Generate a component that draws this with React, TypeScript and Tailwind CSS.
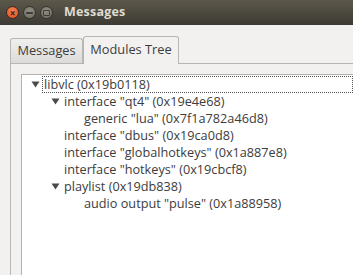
import React from 'react';

type Node = { label: string; depth: number; open?: boolean };

const NODES: Node[] = [
    { label: 'libvlc (0x19b0118)', depth: 0, open: true },
    { label: 'interface "qt4" (0x19e4e68)', depth: 1, open: true },
    { label: 'generic "lua" (0x7f1a782a46d8)', depth: 2 },
    { label: 'interface "dbus" (0x19ca0d8)', depth: 1 },
    { label: 'interface "globalhotkeys" (0x1a887e8)', depth: 1 },
    { label: 'interface "hotkeys" (0x19cbcf8)', depth: 1 },
    { label: 'playlist (0x19db838)', depth: 1, open: true },
    { label: 'audio output "pulse" (0x1a88958)', depth: 2 },
];

const PAD = ['pl-[9px]', 'pl-[29px]', 'pl-[49px]'];

function TitleBar() {
    return (
        <div className="h-[25px] flex items-center bg-gradient-to-b from-[#5c594b] to-[#3c3a33] pl-[6px]">
            <div className="flex items-center gap-[4px]">
                <span className="w-[13px] h-[13px] rounded-full bg-[radial-gradient(circle_at_50%_35%,#f7845a,#df4a1b)] border border-[#3a2a20] flex items-center justify-center text-[#3b2418] text-[10px] leading-none font-bold">
                    ×
                </span>
                <span className="w-[13px] h-[13px] rounded-full bg-[radial-gradient(circle_at_50%_35%,#8f8c82,#6c6a61)] border border-[#35332d] flex items-center justify-center">
                    <span className="w-[7px] h-[2px] bg-[#3f3d37] rounded-sm" />
                </span>
                <span className="w-[13px] h-[13px] rounded-full bg-[radial-gradient(circle_at_50%_35%,#8f8c82,#6c6a61)] border border-[#35332d] flex items-center justify-center">
                    <span className="w-[7px] h-[6px] border-[1.5px] border-[#3f3d37] rounded-[1px]" />
                </span>
            </div>
            <span className="ml-[11px] text-[12.5px] font-bold text-[#dfdbd2] tracking-[0.2px]">Messages</span>
        </div>
    );
}

function Tabs() {
    return (
        <div className="flex items-end pl-[10px] h-[38px]">
            <div className="w-[73px] h-[25px] border border-b-0 border-[#b7b6b2] rounded-t-[3px] bg-gradient-to-b from-[#efefee] to-[#dcdbd9] flex items-center justify-center text-[12.8px] text-[#3c3c3c]">
                Messages
            </div>
            <div className="w-[96px] h-[28px] -mb-px relative border border-b-0 border-[#b7b6b2] rounded-t-[3px] bg-[#f2f1f0] flex items-center justify-center text-[12.8px] text-[#3c3c3c] pb-[2px]">
                Modules Tree
            </div>
            <div className="flex-1" />
        </div>
    );
}

function Tree() {
    return (
        <div className="flex-1 bg-white border-l border-t border-[#b3b2ae] pt-[1px]">
            {NODES.map((n, i) => (
                <div key={i} className={`h-[17px] flex items-center ${PAD[n.depth]}`}>
                    <span className="w-[11px] shrink-0 flex items-center">
                        {n.open && (
                            <svg width="9" height="7" viewBox="0 0 9 7">
                                <path d="M0.5 0.5 L8.5 0.5 L4.5 6.5 Z" fill="#4a4a4a" />
                            </svg>
                        )}
                    </span>
                    <span
                        className={`whitespace-nowrap leading-[15px] text-[12.7px] text-[#3c3c3c] ${
                            i === 0 ? 'flex-1 border border-dotted border-[#555] pl-[1px]' : 'pl-[2px]'
                        }`}
                    >
                        {n.label}
                    </span>
                </div>
            ))}
        </div>
    );
}

export default function App() {
    return (
        <div
            className="w-[353px] h-[275px] overflow-hidden bg-[#f2f1f0] flex flex-col"
            style={{ fontFamily: '"Open Sans", "DejaVu Sans", sans-serif' }}
        >
            <TitleBar />
            <Tabs />
            <div className="flex-1 ml-[10px] border-l border-t border-[#b7b6b2] flex flex-col pl-[10px] pt-[10px]">
                <Tree />
            </div>
        </div>
    );
}
